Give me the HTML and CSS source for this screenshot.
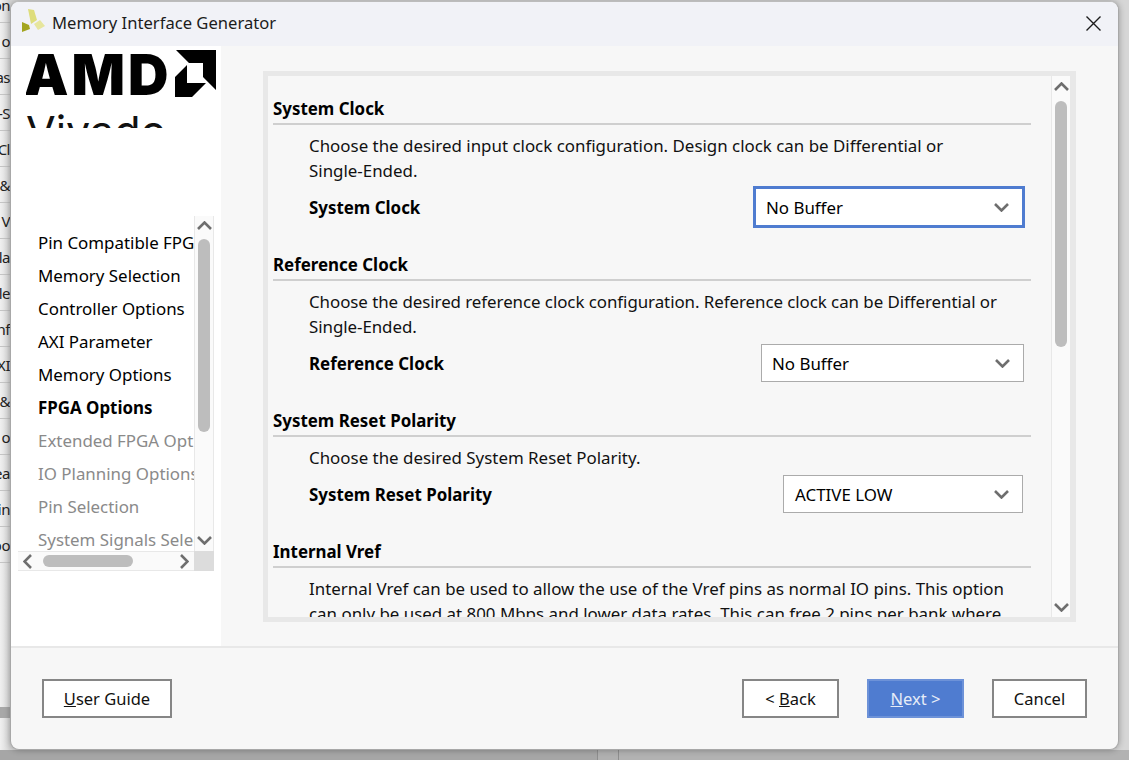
FILE: index.html
```html
<!DOCTYPE html>
<html lang="en">
<head>
    <meta charset="UTF-8">
    <title>Memory Interface Generator</title>
    <link rel="stylesheet" href="styles.css">
</head>
<body>
    <!-- main window behind the dialog -->
    <div class="desk">
        <div class="desk-rows">
            <div class="desk-row"><span>on</span></div>
            <div class="desk-row"><span>o</span></div>
            <div class="desk-row"><span>as</span></div>
            <div class="desk-row"><span>-S</span></div>
            <div class="desk-row"><span>Cl</span></div>
            <div class="desk-row"><span>&amp;</span></div>
            <div class="desk-row"><span>t V</span></div>
            <div class="desk-row"><span>la</span></div>
            <div class="desk-row"><span>le</span></div>
            <div class="desk-row"><span>nf</span></div>
            <div class="desk-row"><span>XI</span></div>
            <div class="desk-row"><span>t &amp;</span></div>
            <div class="desk-row"><span>o</span></div>
            <div class="desk-row"><span>ea</span></div>
            <div class="desk-row"><span>tin</span></div>
            <div class="desk-row"><span>oo</span></div>
        </div>
        <div class="desk-band"></div>
    </div>
    <div class="desk-bottom">
        <div class="desk-seg seg-a"></div>
        <div class="desk-seg seg-b"></div>
        <div class="desk-seg seg-c"></div>
    </div>

    <div class="dialog">
        <header class="titlebar">
            <svg class="app-icon" width="26" height="26" viewBox="0 0 26 26">
                <polygon points="7,0 13,1 16,11 10,15" fill="#dedd7c"/>
                <polygon points="13,15 19,11 24,17 17,21" fill="#e7e69d"/>
                <polygon points="1,13 8,16 9,20 1,23" fill="#a3a520"/>
            </svg>
            <span class="title">Memory Interface Generator</span>
            <svg class="close" width="15" height="15" viewBox="0 0 15 15">
                <path d="M0.5 0.5 L14.5 14.5 M14.5 0.5 L0.5 14.5"/>
            </svg>
        </header>

        <div class="content">
            <aside class="sidebar">
                <div class="logo">
                    <div class="logo-top">
                        <span class="amd">AMD</span>
                        <svg class="amd-mark" width="42" height="48" viewBox="0 0 42 48">
                            <polygon points="1,0 41,0 41,40 28,27 28,13 14,13"/>
                            <polygon points="0,27 12,15 12,33 31,33 17,47 0,47"/>
                        </svg>
                    </div>
                    <div class="vivado">Vivado</div>
                </div>

                <div class="steps">
                    <div class="steps-top">
                        <ul class="step-list">
                            <li>Pin Compatible FPGAs</li>
                            <li>Memory Selection</li>
                            <li>Controller Options</li>
                            <li>AXI Parameter</li>
                            <li>Memory Options</li>
                            <li class="current">FPGA Options</li>
                            <li class="off">Extended FPGA Options</li>
                            <li class="off">IO Planning Options</li>
                            <li class="off">Pin Selection</li>
                            <li class="off">System Signals Selection</li>
                        </ul>
                        <div class="vbar steps-vbar">
                            <svg class="chev" width="15" height="9" viewBox="0 0 15 9"><path d="M1 8 L7.5 1.5 L14 8"/></svg>
                            <div class="thumb"></div>
                            <svg class="chev" width="15" height="9" viewBox="0 0 15 9"><path d="M1 1 L7.5 7.5 L14 1"/></svg>
                        </div>
                    </div>
                    <div class="hbar-row">
                        <div class="hbar">
                            <svg class="chev" width="9" height="15" viewBox="0 0 9 15"><path d="M8 1 L1.5 7.5 L8 14"/></svg>
                            <div class="hthumb"></div>
                            <svg class="chev" width="9" height="15" viewBox="0 0 9 15"><path d="M1 1 L7.5 7.5 L1 14"/></svg>
                        </div>
                        <div class="corner"></div>
                    </div>
                </div>
            </aside>

            <main class="page">
                <div class="scroll-box">
                    <div class="form">
                        <section class="group">
                            <h2>System Clock</h2>
                            <p>Choose the desired input clock configuration. Design clock can be Differential or<br>Single-Ended.</p>
                            <div class="field">
                                <label>System Clock</label>
                                <div class="select select-focus">
                                    <span>No Buffer</span>
                                    <svg class="chev" width="15" height="9" viewBox="0 0 15 9"><path d="M1 1 L7.5 7.5 L14 1"/></svg>
                                </div>
                            </div>
                        </section>
                        <section class="group">
                            <h2>Reference Clock</h2>
                            <p class="tight">Choose the desired reference clock configuration. Reference clock can be Differential or<br>Single-Ended.</p>
                            <div class="field field-ref">
                                <label>Reference Clock</label>
                                <div class="select select-ref">
                                    <span>No Buffer</span>
                                    <svg class="chev" width="15" height="9" viewBox="0 0 15 9"><path d="M1 1 L7.5 7.5 L14 1"/></svg>
                                </div>
                            </div>
                        </section>
                        <section class="group group-short">
                            <h2>System Reset Polarity</h2>
                            <p>Choose the desired System Reset Polarity.</p>
                            <div class="field field-reset">
                                <label>System Reset Polarity</label>
                                <div class="select select-reset">
                                    <span>ACTIVE LOW</span>
                                    <svg class="chev" width="15" height="9" viewBox="0 0 15 9"><path d="M1 1 L7.5 7.5 L14 1"/></svg>
                                </div>
                            </div>
                        </section>
                        <section class="group">
                            <h2>Internal Vref</h2>
                            <p>Internal Vref can be used to allow the use of the Vref pins as normal IO pins. This option<br>can only be used at 800 Mbps and lower data rates. This can free 2 pins per bank where</p>
                        </section>
                    </div>
                    <div class="vbar form-vbar">
                        <svg class="chev" width="15" height="9" viewBox="0 0 15 9"><path d="M1 8 L7.5 1.5 L14 8"/></svg>
                        <div class="thumb"></div>
                        <svg class="chev" width="15" height="9" viewBox="0 0 15 9"><path d="M1 1 L7.5 7.5 L14 1"/></svg>
                    </div>
                </div>
            </main>
        </div>

        <footer class="footer">
            <button class="btn btn-guide"><u>U</u>ser Guide</button>
            <div class="nav-btns">
                <button class="btn btn-back">&lt; <u>B</u>ack</button>
                <button class="btn btn-next"><u>N</u>ext &gt;</button>
                <button class="btn btn-cancel">Cancel</button>
            </div>
        </footer>
    </div>
</body>
</html>
```

FILE: styles.css
```css
* { box-sizing: border-box; }
html, body { height: 100%; }
body { margin: 0; overflow: hidden; position: relative; background: #d6d6d6; font-family: "Noto Sans", sans-serif; font-size: 16.9px; color: #000; }

/* window behind the dialog */
.desk { width: 10px; height: 750px; display: flex; flex-direction: column; background: linear-gradient(to right, #f0f0f0, #d4d4d4); overflow: hidden; }
.desk-rows { margin-top: -13px; flex: 1; }
.desk-row { height: 36px; border-bottom: 1px solid #c4c4c4; display: flex; justify-content: flex-end; align-items: center; white-space: nowrap; font-size: 15px; letter-spacing: -0.5px; color: #222; }
.desk-band { height: 11px; margin-bottom: 32px; background: #a8a8a8; }
.desk-bottom { position: absolute; left: 0; right: 0; bottom: 0; height: 10px; display: flex; }
.desk-seg { height: 100%; }
.seg-a { width: 597px; background: #a6a6a6; }
.seg-b { width: 22px; background: #b0b0b0; border-left: 1px solid #8e8e8e; border-right: 1px solid #8e8e8e; }
.seg-c { flex: 1; background: #b2b2b2; }

/* dialog */
.dialog { position: absolute; left: 10px; top: 1px; width: 1109px; height: 749px; display: flex; flex-direction: column; background: #f7f7f7; border-radius: 9px; overflow: hidden; border: 1px solid #a8a8a8; border-top-color: #bcbcbc; box-shadow: 0 0 6px rgba(0, 0, 0, 0.3); }
.titlebar { height: 44px; flex: none; display: flex; align-items: center; padding-left: 10px; background: #f1f2f7; }
.app-icon { flex: none; margin-top: -4px; }
.title { margin-left: 5px; margin-top: -4px; font-size: 16.6px; color: #1c1c1c; }
.close { margin-left: auto; margin-right: 17px; margin-top: -1px; }
.close path { fill: none; stroke: #1c1c1c; stroke-width: 1.4; }

.content { flex: 1; display: flex; min-height: 0; border-bottom: 2px solid #e8e8e8; }
.sidebar { width: 210px; flex: none; background: #fff; display: flex; flex-direction: column; }

.logo { height: 80px; margin: 2px 4px 0 15px; overflow: hidden; }
.logo-top { display: flex; align-items: flex-start; height: 50px; }
.amd { font-family: "Inter", sans-serif; font-weight: 900; font-size: 56px; line-height: 50px; letter-spacing: 3px; color: #000; margin: 2px 0 0 -2px; width: 152px; }
.amd-mark { flex: none; margin-top: 2px; }
.vivado { font-family: "Inter", sans-serif; font-size: 43px; line-height: 60px; margin-top: 3px; color: #111; }

.steps { margin: 88px 0 0 7px; width: 196px; }
.steps-top { display: flex; height: 335px; }
.step-list { list-style: none; margin: 0; padding: 10px 0 0 20px; width: 176px; overflow: hidden; white-space: nowrap; }
.step-list li { height: 33px; line-height: 33px; }
.step-list .current { font-weight: 700; }
.step-list .off { color: #8a8a8a; }

.vbar { display: flex; flex-direction: column; align-items: center; justify-content: space-between; flex: none; width: 20px; padding: 5px 0 6px; background: #fafafa; border-left: 1px solid #e8e8e8; border-right: 1px solid #e8e8e8; }
.thumb { width: 12px; background: #bdbdbd; border-radius: 6px; margin-bottom: auto; }
.steps-vbar .thumb { height: 193px; margin-top: 9px; }
.form-vbar { padding: 6px 0 5px; }
.form-vbar .thumb { height: 246px; margin-top: 10px; }
.chev { flex: none; }
.chev path { fill: none; stroke: #6e6e6e; stroke-width: 2.6; }

.hbar-row { display: flex; height: 20px; }
.hbar { width: 176px; display: flex; align-items: center; padding: 0 5px; background: #fafafa; border-top: 1px solid #e8e8e8; border-bottom: 1px solid #e8e8e8; }
.hthumb { width: 90px; height: 12px; margin: 0 auto 0 11px; background: #bdbdbd; border-radius: 6px; }
.corner { width: 20px; background: #dcdcdc; }

.page { flex: 1; padding: 25px 42px 24px; }
.scroll-box { height: 551px; display: flex; border: 5px solid #e8e8e8; overflow: hidden; }
.form { flex: 1; padding: 0 20px 0 5px; overflow: hidden; }
.group { height: 156px; padding-top: 21px; }
.group-short { height: 131px; }
.group h2 { margin: 0; height: 28px; font-size: 16.9px; font-weight: 700; line-height: 24px; border-bottom: 2px solid #cfcfcf; }
.group p { margin: 8px 0 0 36px; line-height: 25px; white-space: nowrap; color: #111; }
.group .tight { letter-spacing: -0.055px; }
.field { display: flex; justify-content: space-between; align-items: center; margin: 3px 6px 0 36px; }
.field-ref { margin: 5px 7px 0 36px; }
.field-reset { margin: 5px 8px 0 36px; }
.field label { font-weight: 700; }
.select { height: 38px; display: flex; justify-content: space-between; align-items: center; padding: 0 13px 0 11px; background: #fff; border: 1px solid #ababab; }
.select-focus { width: 272px; height: 42px; border: 3px solid #4f7cd0; padding-left: 10px; }
.select-ref { width: 263px; padding-left: 10px; }
.select-reset { width: 240px; }

.footer { height: 101px; flex: none; display: flex; justify-content: space-between; padding: 31px 31px 0; align-items: flex-start; }
.nav-btns { display: flex; gap: 28px; }
.btn { height: 39px; padding: 0; background: #fff; border: 2px solid #868686; font-family: inherit; font-size: 16.5px; color: #111; }
.btn-guide { width: 130px; }
.btn-back { width: 97px; }
.btn-next { width: 97px; background: #4f7cd0; border-color: #6d92d8; color: #e6ecf8; }
.btn-cancel { width: 95px; }
```
